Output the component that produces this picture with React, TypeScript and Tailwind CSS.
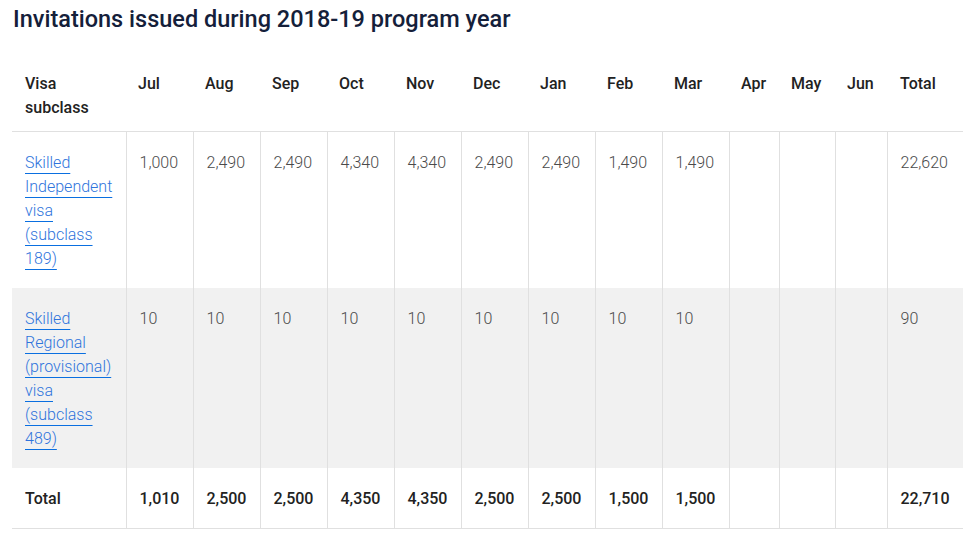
const months = ["Jul", "Aug", "Sep", "Oct", "Nov", "Dec", "Jan", "Feb", "Mar", "Apr", "May", "Jun"];

const rows = [
  {
    name: "Skilled Independent visa (subclass 189)",
    values: ["1,000", "2,490", "2,490", "4,340", "4,340", "2,490", "2,490", "1,490", "1,490", "", "", ""],
    total: "22,620",
    shaded: false,
  },
  {
    name: "Skilled Regional (provisional) visa (subclass 489)",
    values: ["10", "10", "10", "10", "10", "10", "10", "10", "10", "", "", ""],
    total: "90",
    shaded: true,
  },
];

const totals = ["1,010", "2,500", "2,500", "4,350", "4,350", "2,500", "2,500", "1,500", "1,500", "", "", ""];

const widths = [114, 67, 67, 67, 67, 67, 67, 67, 67, 67, 50, 56, 52, 76];

export default function App() {
  return (
    <div className="min-h-screen bg-white font-['Roboto',sans-serif]">
      <h2 className="pl-[13px] pt-[5px] text-[23.5px] leading-[28px] font-medium text-[#14203a]">
        Invitations issued during 2018-19 program year
      </h2>

      <table className="mt-[20px] ml-[12px] w-[951px] table-fixed border-collapse text-[16px] leading-[24px]">
        <colgroup>
          {widths.map((w, i) => (
            <col key={i} style={{ width: w }} />
          ))}
        </colgroup>
        <thead>
          <tr className="border-b border-[#e0e0e0]">
            <th className="pl-[13px] pr-[8px] pt-[19px] pb-[11px] text-left align-top font-medium text-[#222]">
              Visa subclass
            </th>
            {months.map((m) => (
              <th key={m} className="pl-[12px] pr-[4px] pt-[19px] pb-[11px] text-left align-top font-medium text-[#222]">
                {m}
              </th>
            ))}
            <th className="pl-[13px] pr-[4px] pt-[19px] pb-[11px] text-left align-top font-medium text-[#222]">
              Total
            </th>
          </tr>
        </thead>
        <tbody>
          {rows.map((row) => (
            <tr key={row.name} className={row.shaded ? "bg-[#f1f1f1]" : "bg-white"}>
              <td className="pl-[13px] pr-[4px] pt-[19px] pb-[17px] align-top font-light">
                <a
                  href="#"
                  className="text-[#2f74dc] underline decoration-[#0a6fe0] decoration-1 underline-offset-[5px]"
                >
                  {row.name}
                </a>
              </td>
              {row.values.map((v, i) => (
                <td key={i} className="border-l border-[#e0e0e0] pl-[13px] pr-[4px] pt-[19px] pb-[17px] align-top font-light text-[#4a4a4a]">
                  {v}
                </td>
              ))}
              <td className="border-l border-[#e0e0e0] pl-[13px] pr-[4px] pt-[19px] pb-[17px] align-top font-light text-[#4a4a4a]">
                {row.total}
              </td>
            </tr>
          ))}
          <tr className="border-b border-[#e0e0e0]">
            <td className="pl-[13px] pr-[4px] pt-[19px] pb-[17px] align-top font-medium text-[#222]">Total</td>
            {totals.map((v, i) => (
              <td key={i} className="border-l border-[#e0e0e0] pl-[13px] pr-[4px] pt-[19px] pb-[17px] align-top font-medium text-[#222]">
                {v}
              </td>
            ))}
            <td className="border-l border-[#e0e0e0] pl-[13px] pr-[4px] pt-[19px] pb-[17px] align-top font-medium text-[#222]">
              22,710
            </td>
          </tr>
        </tbody>
      </table>
    </div>
  );
}
